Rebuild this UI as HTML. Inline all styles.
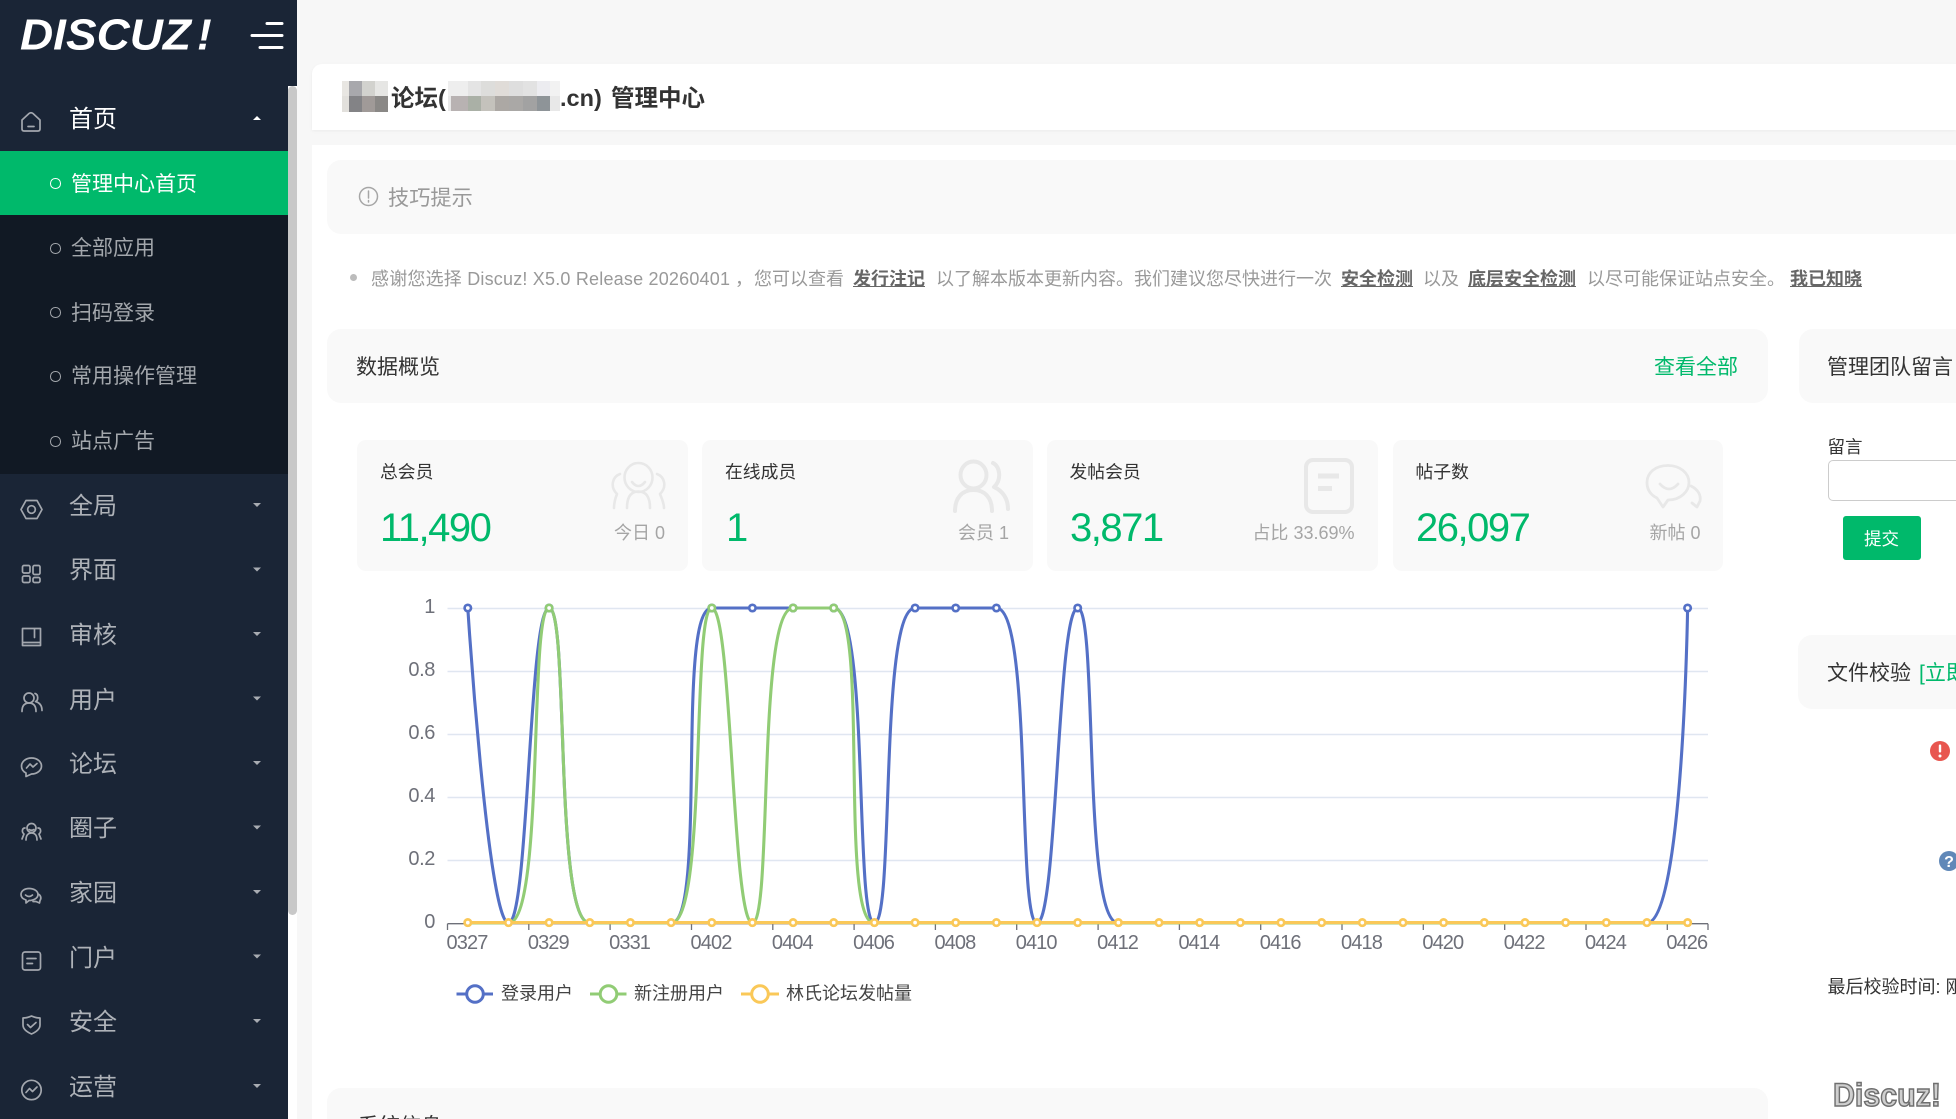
<!DOCTYPE html>
<html lang="zh">
<head>
<meta charset="utf-8">
<title>管理中心</title>
<style>
html,body{margin:0;padding:0;width:1956px;height:1119px;overflow:hidden;background:#f7f7f7}
body{position:relative;font-family:"Liberation Sans","Noto Sans CJK SC",sans-serif;color:#333}
.b{position:absolute}
.t{position:absolute;white-space:nowrap;line-height:1;margin-top:1.2px}
.m{font-size:24px;left:69px;color:#aeb2b8}
.s{font-size:21px;left:71px;color:#a3a7ac}
.c{position:absolute;left:50px;width:8.5px;height:8.5px;border:1.5px solid #a3a7ac;border-radius:50%;margin-top:1px}
.g{background:#f9f9f9;border-radius:14px}
.card{position:absolute;top:440px;width:330.5px;height:131px;background:#f9f9f9;border-radius:9px}
.l{font-size:17.8px;top:463px;color:#333}
.n{font-size:40px;top:507px;color:#00b96b;letter-spacing:-1.5px}
.r{font-size:18px;top:523px;color:#a5a5a5}
.h{font-size:21px;color:#333}
.w{font-size:18px;color:#999;top:268.5px}
.k{font-size:18px;color:#666;font-weight:bold;top:268.5px;text-decoration:underline}
svg{position:absolute;left:0;top:0}
</style>
</head>
<body>
<!-- sidebar -->
<div class="b" style="left:0;top:0;width:297px;height:86px;background:#1a2536"></div>
<div class="b" style="left:0;top:0;width:288px;height:1119px;background:#1a2536"></div>
<div class="b" style="left:288px;top:86px;width:9px;height:1033px;background:#fff"></div>
<div class="b" style="left:288px;top:78px;width:9px;height:8px;background:#1a2536"></div>
<div class="b" style="left:288px;top:86px;width:9px;height:829px;background:#c8c8c8;border-radius:5px"></div>
<div class="b" style="left:0;top:151px;width:288px;height:322.5px;background:#111924"></div>
<div class="b" style="left:0;top:151px;width:288px;height:64px;background:#00b96b"></div>

<svg width="300" height="70" viewBox="0 0 300 70" style="z-index:2">
<text x="20" y="49.500" font-family="Liberation Sans" font-size="44" font-weight="bold" font-style="italic" fill="#fff" textLength="171" lengthAdjust="spacingAndGlyphs">DISCUZ</text>
<text x="197" y="49.500" font-family="Liberation Sans" font-size="44" font-weight="bold" font-style="italic" fill="#fff">!</text>
<path d="M267 23.500H282M252 35.500H282M260 47.500H282" stroke="#fff" stroke-width="3" stroke-linecap="round" fill="none"/>
</svg>

<div class="t m" style="top:106.500px;color:#fff">首页</div>
<div class="c" style="top:177px;border-color:#fff"></div><div class="t s" style="top:172.500px;color:#fff">管理中心首页</div>
<div class="c" style="top:242px"></div><div class="t s" style="top:237px">全部应用</div>
<div class="c" style="top:306px"></div><div class="t s" style="top:301.500px">扫码登录</div>
<div class="c" style="top:370px"></div><div class="t s" style="top:365px">常用操作管理</div>
<div class="c" style="top:435px"></div><div class="t s" style="top:430px">站点广告</div>
<div class="t m" style="top:494px">全局</div>
<div class="t m" style="top:558px">界面</div>
<div class="t m" style="top:623px">审核</div>
<div class="t m" style="top:687.500px">用户</div>
<div class="t m" style="top:751.500px">论坛</div>
<div class="t m" style="top:816px">圈子</div>
<div class="t m" style="top:881px">家园</div>
<div class="t m" style="top:945.500px">门户</div>
<div class="t m" style="top:1010px">安全</div>
<div class="t m" style="top:1074.500px">运营</div>

<svg width="300" height="1119" viewBox="0 0 300 1119" fill="none" stroke="#a3a7ae" stroke-width="1.7" stroke-linejoin="round" stroke-linecap="round" style="z-index:2">
<path d="M22 120L29 113.500Q31 112 33 113.500L40 120V129Q40 131 38 131H24Q22 131 22 129Z"/><path d="M28 126.500H34"/>
<path d="M21 509.500L26 500.500H37L42 509.500L37 518.500H26Z"/><circle cx="31.500" cy="509.500" r="3.800"/>
<rect x="22.500" y="565.500" width="7.500" height="7.500" rx="1.500"/><rect x="33" y="565.500" width="7" height="9" rx="1.500"/><rect x="22.500" y="576" width="7.500" height="6.500" rx="1.500"/><rect x="33" y="577.500" width="7" height="5" rx="1.500"/>
<path d="M22.500 628.500H40.500V645.500H22.500ZM22.500 642.500H40.500M34.500 629V637.500"/>
<circle cx="29" cy="698" r="5"/><path d="M22 711.500C22 705 25 703 29 703S36 705 36 711.500M35 693.500C38.500 694.500 38.500 700.500 35.500 701.500C39 702.500 42 705 42 710.500"/>
<path d="M31.500 758C37 758 41.500 761.500 41.500 766S37 774 31.500 774L26 776.500V773C23 771.500 21.500 769 21.500 766C21.500 761.500 26 758 31.500 758Z"/><path d="M26.500 768L30 764L33 767L37 763.500"/>
<circle cx="31.500" cy="828" r="4.500"/><path d="M29 829.500Q31.500 831 34 829.500M26 840C26 835.500 28 833 31.500 833S37 835.500 37 840M25 828C22 828 21.500 832 24 834L22 839M38 828C41 828 41.500 832 39 834L41 839"/>
<path d="M29 888.500C34 888.500 38 891 38 894.500S34 900.500 29 900.500L26 903V900C23 899 21 897 21 894.500C21 891 24.500 888.500 29 888.500Z"/><path d="M25.500 895Q29 898 32.500 895M38 894C41 895 41.500 898.500 40 900.500L39.500 903L36 901.500H33"/>
<rect x="22.500" y="952" width="18" height="18" rx="2.500"/><path d="M27 958.500H36M27 963.500H32.500"/>
<path d="M23 1018C27 1018 29 1017 31.500 1016C34 1017 36 1018 40 1018V1025C40 1029.500 36 1032 31.500 1034C27 1032 23 1029.500 23 1025Z"/><path d="M27.500 1024.500L30.500 1027.500L36 1022.500"/>
<circle cx="31.500" cy="1090" r="9.700"/><path d="M26 1092.500L29.500 1088.500L32.500 1091.500L37 1087"/>
<g fill="#a8acb2" stroke="none">
<path d="M253 120L257 116L261 120Z" fill="#fff"/>
<path d="M253 503L261 503L257 507Z"/><path d="M253 567.500L261 567.500L257 571.500Z"/><path d="M253 632L261 632L257 636Z"/><path d="M253 696.500L261 696.500L257 700.500Z"/><path d="M253 761L261 761L257 765Z"/><path d="M253 825.500L261 825.500L257 829.500Z"/><path d="M253 890L261 890L257 894Z"/><path d="M253 954.500L261 954.500L257 958.500Z"/><path d="M253 1019L261 1019L257 1023Z"/><path d="M253 1084L261 1084L257 1088Z"/>
</g>
</svg>

<!-- header -->
<div class="b" style="left:312px;top:64px;width:1644px;height:66px;background:#fff;border-radius:10px 0 0 0;box-shadow:0 1px 3px rgba(0,0,0,.05)"></div>
<div class="t" style="left:391px;top:86px;font-size:23.500px;font-weight:bold;color:#333">论坛(</div>
<div class="t" style="left:560px;top:86px;font-size:23.500px;font-weight:bold;color:#333">.cn)</div>
<div class="t" style="left:611px;top:86px;font-size:23.500px;font-weight:bold;color:#333">管理中心</div>
<svg width="600" height="120" viewBox="0 0 600 120">
<rect x="342" y="81" width="7" height="15" fill="#e8e6e2"/><rect x="349" y="81" width="13" height="15" fill="#a8a8ac"/><rect x="362" y="81" width="13" height="15" fill="#d2d2ce"/><rect x="375" y="81" width="13" height="15" fill="#e6e6e4"/>
<rect x="342" y="96" width="7" height="16" fill="#e2e0dc"/><rect x="349" y="96" width="13" height="16" fill="#838386"/><rect x="362" y="96" width="13" height="16" fill="#a09a98"/><rect x="375" y="96" width="13" height="16" fill="#8a8886"/>
<rect x="448" y="81" width="20" height="15" fill="#eeeeee"/><rect x="468" y="81" width="13" height="15" fill="#e4e4e4"/><rect x="481" y="81" width="14" height="15" fill="#dddddb"/><rect x="495" y="81" width="14" height="15" fill="#e0dcd8"/><rect x="509" y="81" width="14" height="15" fill="#dedede"/><rect x="523" y="81" width="14" height="15" fill="#e2e2e2"/><rect x="537" y="81" width="13" height="15" fill="#ececf0"/><rect x="550" y="81" width="10" height="15" fill="#f2f2f2"/>
<rect x="448" y="96" width="3" height="15" fill="#e8e8e8"/><rect x="451" y="96" width="17" height="15" fill="#b8b2b2"/><rect x="468" y="96" width="13" height="15" fill="#aab0a6"/><rect x="481" y="96" width="14" height="15" fill="#c4c2bc"/><rect x="495" y="96" width="14" height="15" fill="#aca8a4"/><rect x="509" y="96" width="14" height="15" fill="#aaa8a6"/><rect x="523" y="96" width="14" height="15" fill="#a2a2a2"/><rect x="537" y="96" width="13" height="15" fill="#8e9498"/><rect x="550" y="96" width="10" height="15" fill="#e8e8e8"/>
</svg>

<!-- main -->
<div class="b" style="left:312px;top:145px;width:1644px;height:974px;background:#fff"></div>
<div class="b g" style="left:327px;top:160px;width:1640px;height:74px"></div>
<svg width="400" height="220" viewBox="0 0 400 220" fill="none" stroke="#a6a6a6" stroke-width="1.500"><circle cx="368.500" cy="196.500" r="9"/><path d="M368.500 191V198M368.500 200.500V202" stroke-linecap="round"/></svg>
<div class="t" style="left:388px;top:187px;font-size:21.200px;color:#999">技巧提示</div>

<div class="b" style="left:350px;top:273.500px;width:7px;height:7px;border-radius:50%;background:#bcbcbc"></div>
<div class="t w" style="left:371px;letter-spacing:.2px">感谢您选择 Discuz! X5.0 Release 20260401</div>
<div class="t w" style="left:735px">，</div>
<div class="t w" style="left:754px">您可以查看</div>
<div class="t k" style="left:853px">发行注记</div>
<div class="t w" style="left:936px">以了解本版本更新内容。我们建议您尽快进行一次</div>
<div class="t k" style="left:1341px">安全检测</div>
<div class="t w" style="left:1423px">以及</div>
<div class="t k" style="left:1468px">底层安全检测</div>
<div class="t w" style="left:1587px">以尽可能保证站点安全。</div>
<div class="t k" style="left:1790px">我已知晓</div>

<div class="b g" style="left:327px;top:329px;width:1441px;height:74px"></div>
<div class="t h" style="left:356px;top:356px">数据概览</div>
<div class="t h" style="left:1654px;top:356px;color:#00b96b">查看全部</div>
<div class="b g" style="left:1799px;top:329px;width:180px;height:74px"></div>
<div class="t h" style="left:1827px;top:356px">管理团队留言</div>

<div class="t" style="left:1827.500px;top:438px;font-size:17.500px">留言</div>
<div class="b" style="left:1827.500px;top:460px;width:160px;height:39px;border:1.500px solid #ccc;border-radius:5px;background:#fff"></div>
<div class="b" style="left:1842.500px;top:516px;width:78px;height:44px;background:#00b96b;border-radius:3px"></div>
<div class="t" style="left:1864px;top:530px;font-size:17.500px;color:#fff">提交</div>

<div class="b g" style="left:1798px;top:635px;width:180px;height:74px"></div>
<div class="t h" style="left:1827px;top:662px">文件校验</div>
<div class="t h" style="left:1919px;top:662px;color:#00b96b">[立即校验]</div>
<svg width="1956" height="900" viewBox="0 0 1956 900">
<circle cx="1940" cy="751" r="10" fill="#e8564f"/><rect x="1938.800" y="744.500" width="2.400" height="8" rx="1" fill="#fff"/><circle cx="1940" cy="756" r="1.500" fill="#fff"/>
<circle cx="1949" cy="861" r="10" fill="#6088b8"/>
<text x="1949" y="867" font-family="Liberation Sans" font-weight="bold" font-size="16" text-anchor="middle" fill="#fff">?</text>
</svg>
<div class="t" style="left:1827.500px;top:977px;font-size:18px">最后校验时间: 刚刚</div>

<div class="b g" style="left:327px;top:1088px;width:1441px;height:74px"></div>
<div class="t h" style="left:358px;top:1115px">系统信息</div>

<svg width="1956" height="1119" viewBox="0 0 1956 1119" style="z-index:3;pointer-events:none">
<text x="1833" y="1106" font-family="Liberation Sans" font-weight="bold" font-size="32" fill="#cfcfcf" stroke="#6f6f6f" stroke-width="1.500" textLength="108" lengthAdjust="spacingAndGlyphs">Discuz!</text>
</svg>

<!-- cards -->
<div class="card" style="left:357px"></div>
<div class="card" style="left:702px"></div>
<div class="card" style="left:1047px"></div>
<div class="card" style="left:1392.500px"></div>
<div class="t l" style="left:380px">总会员</div>
<div class="t l" style="left:725px">在线成员</div>
<div class="t l" style="left:1069.500px">发帖会员</div>
<div class="t l" style="left:1415.500px">帖子数</div>
<div class="t n" style="left:380px">11,490</div>
<div class="t n" style="left:726px">1</div>
<div class="t n" style="left:1070px">3,871</div>
<div class="t n" style="left:1416px">26,097</div>
<div class="t r" style="right:1291px">今日 0</div>
<div class="t r" style="right:947px">会员 1</div>
<div class="t r" style="right:601.500px">占比 33.69%</div>
<div class="t r" style="right:255.500px">新帖 0</div>

<svg width="1956" height="1119" viewBox="0 0 1956 1119" fill="none" stroke="#e8e8e8" stroke-linecap="round" stroke-linejoin="round">
<g stroke-width="2.600">
<ellipse cx="638.500" cy="477.500" rx="14" ry="14.500"/><path d="M632 482Q638.500 490 645 482M627 508C627 497 631 491.500 638.500 491.500S650 497 650 508M620 474C612 477 610 487 617 494C615 499 614 503 614 508M657 474C665 477 667 487 660 494C662 499 664 503 664 508"/>
</g>
<g stroke-width="4">
<ellipse cx="973.500" cy="475" rx="13" ry="13.500"/><path d="M955 511C955 498 962 490 973.500 490S992 498 992 511M993 463C1000 466 1002 480 994 487C1003 491 1008 499 1008 509"/>
<rect x="1306" y="460" width="46" height="52" rx="7"/>
</g>
<path d="M1318 476H1339M1318 488.500H1332" stroke-width="5" stroke-linecap="butt"/>
<g stroke-width="2.800">
<path d="M1668 465.500C1655 465.500 1647 473 1647 482.500C1647 490 1651 495 1657 498L1663 507L1668 500C1681 500 1689 491 1689 482.500C1689 473 1680 465.500 1668 465.500Z"/>
<path d="M1660 484Q1669 494 1678 484M1691 486C1699 490 1701 496 1700 501L1697 507L1692 503"/>
</g>
</svg>

<!-- chart -->
<svg width="1956" height="1119" viewBox="0 0 1956 1119" fill="none" font-family="Liberation Sans" style="z-index:1">
<path d="M447.500 608.500H1708M447.500 671.500H1708M447.500 734.500H1708M447.500 797.500H1708M447.500 860.500H1708" stroke="#e0e6f1" stroke-width="1.400"/>
<path d="M447.500 923.700H1708M447.500 923.700V930M528.800 923.700V930M610.100 923.700V930M691.500 923.700V930M772.800 923.700V930M854.100 923.700V930M935.400 923.700V930M1016.700 923.700V930M1098.100 923.700V930M1179.400 923.700V930M1260.700 923.700V930M1342 923.700V930M1423.300 923.700V930M1504.700 923.700V930M1586 923.700V930M1667.300 923.700V930M1708 923.700V930" stroke="#6e7079" stroke-width="1.300"/>
<g fill="#6e7079" font-size="20" text-anchor="end" letter-spacing="-.4">
<text x="435" y="613">1</text><text x="435" y="676">0.8</text><text x="435" y="739">0.6</text><text x="435" y="802">0.4</text><text x="435" y="865">0.2</text><text x="435" y="928">0</text>
</g>
<g fill="#6e7079" font-size="20" text-anchor="middle" letter-spacing="-.9">
<text x="467" y="949">0327</text><text x="548.300" y="949">0329</text><text x="629.600" y="949">0331</text><text x="711" y="949">0402</text><text x="792.300" y="949">0404</text><text x="873.600" y="949">0406</text><text x="954.900" y="949">0408</text><text x="1036.200" y="949">0410</text><text x="1117.600" y="949">0412</text><text x="1198.900" y="949">0414</text><text x="1280.200" y="949">0416</text><text x="1361.500" y="949">0418</text><text x="1442.800" y="949">0420</text><text x="1524.200" y="949">0422</text><text x="1605.500" y="949">0424</text><text x="1686.800" y="949">0426</text>
</g>
<path stroke="#5470c6" stroke-width="3.100" d="M467.800 608C467.800 608 488.200 923 508.500 923C528.800 923 528.800 608 549.100 608C569.400 608 553.700 923 589.800 923L671.100 923C707.200 923 675.700 608 711.800 608L833.700 608C869.800 608 854.100 923 874.400 923C894.700 923 879 608 915.100 608L996.400 608C1032.500 608 1016.700 923 1037 923C1057.300 923 1057.400 608 1077.700 608C1098 608 1082.300 923 1118.400 923L1646.900 923C1683 923 1687.600 608 1687.600 608"/>
<path stroke="#91cc75" stroke-width="3.100" d="M467.800 923L508.500 923C544.600 923 528.800 608 549.100 608C569.400 608 553.700 923 589.800 923L671.100 923C707.200 923 691.500 608 711.800 608C732.100 608 732.100 923 752.400 923C772.700 923 757 608 793.100 608L833.700 608C869.800 608 838.300 923 874.400 923L1687.600 923"/>
<path stroke="#fac858" stroke-width="3.100" d="M467.800 922.600H1687.600"/>
<g stroke="#5470c6" stroke-width="2.700" fill="#fff">
<circle cx="467.800" cy="608" r="3.200"/><circle cx="549.100" cy="608" r="3.200"/><circle cx="711.800" cy="608" r="3.200"/><circle cx="752.400" cy="608" r="3.200"/><circle cx="793.100" cy="608" r="3.200"/><circle cx="833.700" cy="608" r="3.200"/><circle cx="915.100" cy="608" r="3.200"/><circle cx="955.700" cy="608" r="3.200"/><circle cx="996.400" cy="608" r="3.200"/><circle cx="1077.700" cy="608" r="3.200"/><circle cx="1687.600" cy="608" r="3.200"/>
</g>
<g stroke="#91cc75" stroke-width="2.700" fill="#fff">
<circle cx="549.100" cy="608" r="3.200"/><circle cx="711.800" cy="608" r="3.200"/><circle cx="793.100" cy="608" r="3.200"/><circle cx="833.700" cy="608" r="3.200"/>
</g>
<g stroke="#fac858" stroke-width="2.700" fill="#fff">
<circle cx="467.800" cy="922.600" r="3.200"/><circle cx="508.500" cy="922.600" r="3.200"/><circle cx="549.100" cy="922.600" r="3.200"/><circle cx="589.800" cy="922.600" r="3.200"/><circle cx="630.400" cy="922.600" r="3.200"/><circle cx="671.100" cy="922.600" r="3.200"/><circle cx="711.800" cy="922.600" r="3.200"/><circle cx="752.400" cy="922.600" r="3.200"/><circle cx="793.100" cy="922.600" r="3.200"/><circle cx="833.700" cy="922.600" r="3.200"/><circle cx="874.400" cy="922.600" r="3.200"/><circle cx="915.100" cy="922.600" r="3.200"/><circle cx="955.700" cy="922.600" r="3.200"/><circle cx="996.400" cy="922.600" r="3.200"/><circle cx="1037" cy="922.600" r="3.200"/><circle cx="1077.700" cy="922.600" r="3.200"/><circle cx="1118.400" cy="922.600" r="3.200"/><circle cx="1159" cy="922.600" r="3.200"/><circle cx="1199.700" cy="922.600" r="3.200"/><circle cx="1240.300" cy="922.600" r="3.200"/><circle cx="1281" cy="922.600" r="3.200"/><circle cx="1321.700" cy="922.600" r="3.200"/><circle cx="1362.300" cy="922.600" r="3.200"/><circle cx="1403" cy="922.600" r="3.200"/><circle cx="1443.600" cy="922.600" r="3.200"/><circle cx="1484.300" cy="922.600" r="3.200"/><circle cx="1525" cy="922.600" r="3.200"/><circle cx="1565.600" cy="922.600" r="3.200"/><circle cx="1606.300" cy="922.600" r="3.200"/><circle cx="1646.900" cy="922.600" r="3.200"/><circle cx="1687.600" cy="922.600" r="3.200"/>
</g>
<path d="M456.500 994H493" stroke="#5470c6" stroke-width="3"/><circle cx="475" cy="994" r="8.300" fill="#fff" stroke="#5470c6" stroke-width="3"/>
<path d="M590 994H626.500" stroke="#91cc75" stroke-width="3"/><circle cx="608.500" cy="994" r="8.300" fill="#fff" stroke="#91cc75" stroke-width="3"/>
<path d="M741 994H779" stroke="#fac858" stroke-width="3"/><circle cx="760" cy="994" r="8.300" fill="#fff" stroke="#fac858" stroke-width="3"/>
<g fill="#444" font-size="18" font-family="Liberation Sans, Noto Sans CJK SC, sans-serif">
<text x="501" y="999.500">登录用户</text><text x="634" y="999.500">新注册用户</text><text x="786" y="999.500">林氏论坛发帖量</text>
</g>
</svg>
</body>
</html>
